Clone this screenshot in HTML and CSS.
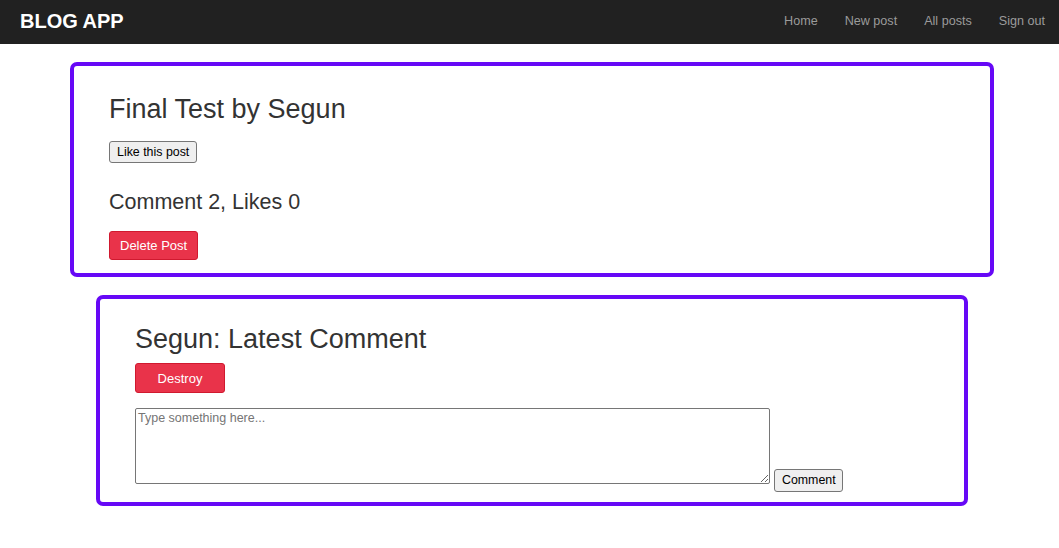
FILE: index.html
```html
<!DOCTYPE html>
<html lang="en">
<head>
<meta charset="utf-8">
<title>Blog App</title>
<link rel="stylesheet" href="styles.css">
</head>
<body>
<nav class="navbar">
  <a class="brand" href="#">BLOG APP</a>
  <ul class="nav-links">
    <li><a href="#">Home</a></li>
    <li><a href="#">New post</a></li>
    <li><a href="#">All posts</a></li>
    <li><a href="#">Sign out</a></li>
  </ul>
</nav>
<main class="main">
  <section class="card card-post">
    <h3 class="title">Final Test by Segun</h3>
    <button class="btn-plain btn-like" type="button">Like this post</button>
    <h4 class="stats">Comment 2, Likes 0</h4>
    <button class="btn-danger btn-delete" type="button">Delete Post</button>
  </section>
  <section class="card card-comment">
    <h3 class="title">Segun: Latest Comment</h3>
    <button class="btn-danger btn-destroy" type="button">Destroy</button>
    <form class="comment-form">
      <textarea class="comment-input" placeholder="Type something here..."></textarea> <button class="btn-plain btn-comment" type="button">Comment</button>
    </form>
  </section>
</main>
</body>
</html>
```

FILE: styles.css
```css
* { box-sizing: border-box; }

body {
  margin: 0;
  font-family: "Liberation Sans", Arial, sans-serif;
  font-size: 16px;
  color: #333;
  background: #fff;
}

.navbar {
  display: flex;
  align-items: center;
  justify-content: space-between;
  height: 44px;
  background: #212121;
  padding: 0 14px 0 20px;
}

.brand {
  color: #fff;
  font-weight: 700;
  font-size: 20px;
  text-decoration: none;
  margin-bottom: 2px;
}

.nav-links {
  display: flex;
  gap: 27px;
  list-style: none;
  margin: 0 0 5px;
  padding: 0;
}

.nav-links a {
  color: #9b9b9b;
  font-size: 12.6px;
  text-decoration: none;
}

.main {
  display: flex;
  flex-direction: column;
  padding-top: 18px;
}

.card {
  border: 4px solid #6608f6;
  border-radius: 7px;
  padding-left: 35px;
}

.card-post {
  margin-left: 70px;
  width: 924px;
  padding-top: 26px;
  padding-bottom: 13px;
}

.card-comment {
  margin-top: 18px;
  margin-left: 96px;
  width: 872px;
  padding-top: 23px;
  padding-bottom: 10px;
}

.title {
  margin: 0;
  font-size: 27px;
  font-weight: 400;
  line-height: 34px;
}

.card-post .title { margin-bottom: 15px; }
.card-comment .title { margin-bottom: 7px; }

.stats {
  margin: 26px 0 16px;
  font-size: 21.5px;
  font-weight: 400;
  line-height: 26px;
}

button { display: block; cursor: pointer; font-family: "Liberation Sans", Arial, sans-serif; }

.btn-plain {
  background: #efefef;
  border: 1px solid #767676;
  border-radius: 3px;
  color: #000;
  font-size: 12.4px;
}

.btn-like {
  padding: 2px 7px;
  line-height: 16px;
}

.btn-danger {
  background: #e9334a;
  border: 1px solid #d0192f;
  border-radius: 3px;
  color: #fff;
  font-size: 13px;
  line-height: 15px;
}

.btn-delete { padding: 6px 10px; }

.btn-destroy {
  width: 90px;
  height: 30px;
  padding: 0;
}

.comment-form {
  margin: 15px 0 0;
  line-height: 16px;
}

.comment-input {
  display: inline-block;
  width: 635px;
  height: 76px;
  border: 1px solid #767676;
  border-radius: 2px;
  padding: 2px;
  font-family: "Liberation Sans", Arial, sans-serif;
  font-size: 12.5px;
  resize: both;
  vertical-align: baseline;
}

.comment-input::placeholder { color: #757575; }

.btn-comment {
  display: inline-block;
  padding: 3px 6.5px;
  line-height: 15px;
}
```
